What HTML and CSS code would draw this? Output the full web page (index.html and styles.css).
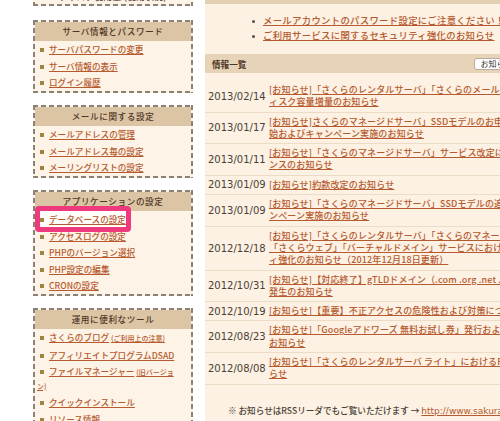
FILE: index.html
```html
<!DOCTYPE html>
<html lang="ja">
<head>
<meta charset="utf-8">
<title>コントロールパネル</title>
<link rel="stylesheet" href="styles.css">
</head>
<body>
<div class="page">
  <aside class="sidebar">
    <section class="box box-cut">
      <p class="cut-text">ディスク使用量 (使用状況)</p>
    </section>

    <section class="box">
      <h2 class="box-title">サーバ情報とパスワード</h2>
      <ul class="menu">
        <li><a href="#">サーバパスワードの変更</a></li>
        <li><a href="#">サーバ情報の表示</a></li>
        <li><a href="#">ログイン履歴</a></li>
      </ul>
    </section>

    <section class="box">
      <h2 class="box-title">メールに関する設定</h2>
      <ul class="menu">
        <li><a href="#">メールアドレスの管理</a></li>
        <li><a href="#">メールアドレス毎の設定</a></li>
        <li><a href="#">メーリングリストの設定</a></li>
      </ul>
    </section>

    <section class="box">
      <h2 class="box-title">アプリケーションの設定</h2>
      <ul class="menu">
        <li class="is-hl"><a href="#">データベースの設定</a></li>
        <li><a href="#">アクセスログの設定</a></li>
        <li><a href="#">PHPのバージョン選択</a></li>
        <li><a href="#">PHP設定の編集</a></li>
        <li><a href="#">CRONの設定</a></li>
      </ul>
      <div class="highlight"></div>
    </section>

    <section class="box">
      <h2 class="box-title">運用に便利なツール</h2>
      <ul class="menu">
        <li><a href="#">さくらのブログ</a> <a href="#" class="small">(ご利用上の注意)</a></li>
        <li><a href="#">アフィリエイトプログラムDSAD</a></li>
        <li><a href="#">ファイルマネージャー</a> <a href="#" class="small">(旧バージョ<br>ン)</a></li>
        <li><a href="#">クイックインストール</a></li>
        <li><a href="#">リソース情報</a></li>
      </ul>
    </section>
  </aside>

  <main class="main">
    <div class="main-topband"></div>
    <ul class="notices">
      <li><a href="#">メールアカウントのパスワード設定にご注意ください！</a></li>
      <li><a href="#">ご利用サービスに関するセキュリティ強化のお知らせ</a></li>
    </ul>

    <div class="info-bar">
      <span class="info-title">情報一覧</span>
      <button class="rss-btn" type="button">お知らせ一覧</button>
    </div>

    <div class="news">
      <div class="news-row">
        <div class="news-date">2013/02/14</div>
        <div class="news-text"><a href="#">[お知らせ]「さくらのレンタルサーバ」「さくらのメールボックス」のデ<br>ィスク容量増量のお知らせ</a></div>
      </div>
      <div class="news-row">
        <div class="news-date">2013/01/17</div>
        <div class="news-text"><a href="#">[お知らせ]さくらのマネージドサーバ」SSDモデルのお申し込み受付開<br>始およびキャンペーン実施のお知らせ</a></div>
      </div>
      <div class="news-row">
        <div class="news-date">2013/01/11</div>
        <div class="news-text"><a href="#">[お知らせ]「さくらのマネージドサーバ」サービス改定に伴うメンテナ<br>ンスのお知らせ</a></div>
      </div>
      <div class="news-row">
        <div class="news-date">2013/01/09</div>
        <div class="news-text"><a href="#">[お知らせ]約款改定のお知らせ</a></div>
      </div>
      <div class="news-row">
        <div class="news-date">2013/01/09</div>
        <div class="news-text"><a href="#">[お知らせ]「さくらのマネージドサーバ」SSDモデルの追加およびキャ<br>ンペーン実施のお知らせ</a></div>
      </div>
      <div class="news-row">
        <div class="news-date">2012/12/18</div>
        <div class="news-text"><a href="#">[お知らせ]「さくらのレンタルサーバ」「さくらのマネージドサーバ」<br>「さくらウェブ」「バーチャルドメイン」サービスにおけるセキュリテ<br>ィ強化のお知らせ（2012年12月18日更新）</a></div>
      </div>
      <div class="news-row">
        <div class="news-date">2012/10/31</div>
        <div class="news-text"><a href="#">[お知らせ]【対応終了】gTLDドメイン（.com .org .net .info .biz）の障害<br>発生のお知らせ</a></div>
      </div>
      <div class="news-row">
        <div class="news-date">2012/10/19</div>
        <div class="news-text"><a href="#">[お知らせ]【重要】不正アクセスの危険性および対策について</a></div>
      </div>
      <div class="news-row">
        <div class="news-date">2012/08/23</div>
        <div class="news-text"><a href="#">[お知らせ]「Googleアドワーズ 無料お試し券」発行および配布開始の<br>お知らせ</a></div>
      </div>
      <div class="news-row">
        <div class="news-date">2012/08/08</div>
        <div class="news-text"><a href="#">[お知らせ]「さくらのレンタルサーバ ライト」におけるPHPのバージョンアップのお知<br>らせ</a></div>
      </div>
    </div>

    <p class="news-foot">※ お知らせはRSSリーダでもご覧いただけます → <a href="#" class="feed-url">http://www.sakura.ad.jp/rss/news.xml</a></p>
  </main>
</div>
</body>
</html>
```

FILE: styles.css
```css
html, body {
  margin: 0;
  padding: 0;
  overflow: hidden;
  background: #ffffff;
}

body {
  font-family: "Noto Sans CJK JP", "Noto Sans", sans-serif;
  font-size: 8.6px;
  font-weight: 500;
  color: #4a3f36;
}

.page {
  display: flex;
  align-items: stretch;
  width: 700px;
  min-height: 421px;
}

a {
  color: #b65a2f;
  text-decoration: underline;
}

/* ---------- sidebar ---------- */
.sidebar {
  flex: none;
  width: 160px;
  margin-left: 33px;
  margin-top: -14.5px;
}

.box {
  --dash: #8b8277;
  position: relative;
  margin-bottom: 12.5px;
  padding: 2px;
  background:
    repeating-linear-gradient(90deg, var(--dash) 0 5px, transparent 5px 8px) left top / 100% 2px no-repeat,
    repeating-linear-gradient(90deg, var(--dash) 0 5px, transparent 5px 8px) left bottom / 100% 2px no-repeat,
    repeating-linear-gradient(180deg, var(--dash) 0 5px, transparent 5px 8px) left top / 2px 100% no-repeat,
    repeating-linear-gradient(180deg, var(--dash) 0 5px, transparent 5px 8px) right top / 2px 100% no-repeat,
    #fdf3e6;
}

.box-cut {
  margin-bottom: 14px;
}

.cut-text {
  margin: 0;
  padding: 2px 0;
  line-height: 12.5px;
  text-align: center;
  letter-spacing: 0.4px;
  color: #4e3526;
}

.box-title {
  margin: 0;
  height: 19px;
  line-height: 19px;
  background: #dcc5a4;
  text-align: center;
  font-size: 8.6px;
  font-weight: 500;
  letter-spacing: 0.6px;
  color: #4e3526;
}

.menu {
  list-style: none;
  margin: 0;
  padding: 0;
}

.menu li {
  padding: 2px 0 2px 2px;
  line-height: 12.5px;
}

.menu li::before {
  content: "";
  display: inline-block;
  width: 4px;
  height: 4px;
  margin: 0 5px 0 3px;
  background: #a2823f;
  vertical-align: 1px;
}

.menu .small {
  font-size: 7px;
}

.menu li.is-hl {
  position: relative;
  z-index: 2;
}

.highlight {
  position: absolute;
  left: 2px;
  top: 16px;
  width: 96px;
  height: 26px;
  box-sizing: border-box;
  border: 5px solid #ee3a7c;
  border-radius: 4px;
  background: rgba(255, 255, 255, 0.8);
  z-index: 1;
}

/* ---------- main ---------- */
.main {
  flex: none;
  width: 420px;
  margin-left: 12px;
  background: #fcf1e3;
}

.main-topband {
  height: 4px;
  background: #e3d0b3;
}

.notices {
  list-style: none;
  margin: 9px 0 0;
  padding: 0 0 0 47px;
}

.notices li {
  line-height: 15px;
  font-size: 9.4px;
  letter-spacing: 0.3px;
  white-space: nowrap;
}

.notices li::before {
  content: "";
  display: inline-block;
  width: 3px;
  height: 3px;
  margin-right: 8px;
  border-radius: 50%;
  background: #555049;
  vertical-align: middle;
}

.info-bar {
  display: flex;
  align-items: center;
  height: 19px;
  margin-top: 11px;
  padding-left: 7px;
  background: #e7d3b7;
}

.info-title {
  font-size: 8.6px;
  font-weight: bold;
  color: #4e3526;
}

.rss-btn {
  margin-left: 228px;
  height: 12px;
  padding: 0 5px;
  border: 1px solid #b6aca0;
  border-radius: 3px;
  background: #ffffff;
  font-family: "Noto Sans CJK JP", sans-serif;
  font-size: 8px;
  line-height: 10px;
  color: #333333;
}

.news {
  margin-top: 8px;
}

.news-row {
  display: grid;
  grid-template-columns: 64px 1fr;
  align-items: center;
  padding: 3px 0;
  border-bottom: 1px solid #ecdcc6;
}

.news-date {
  padding-left: 3px;
  font-family: "DejaVu Sans", sans-serif;
  font-size: 10px;
  font-weight: normal;
  color: #4a3f36;
}

.news-text {
  font-size: 9px;
  line-height: 12.3px;
  letter-spacing: 0.15px;
  white-space: nowrap;
}

.news-foot {
  margin: 19px 0 0;
  padding-left: 23px;
  line-height: 12px;
  white-space: nowrap;
  color: #4a3f36;
}

.feed-url {
  font-family: "DejaVu Sans", sans-serif;
  font-size: 9px;
  font-weight: normal;
}
```
